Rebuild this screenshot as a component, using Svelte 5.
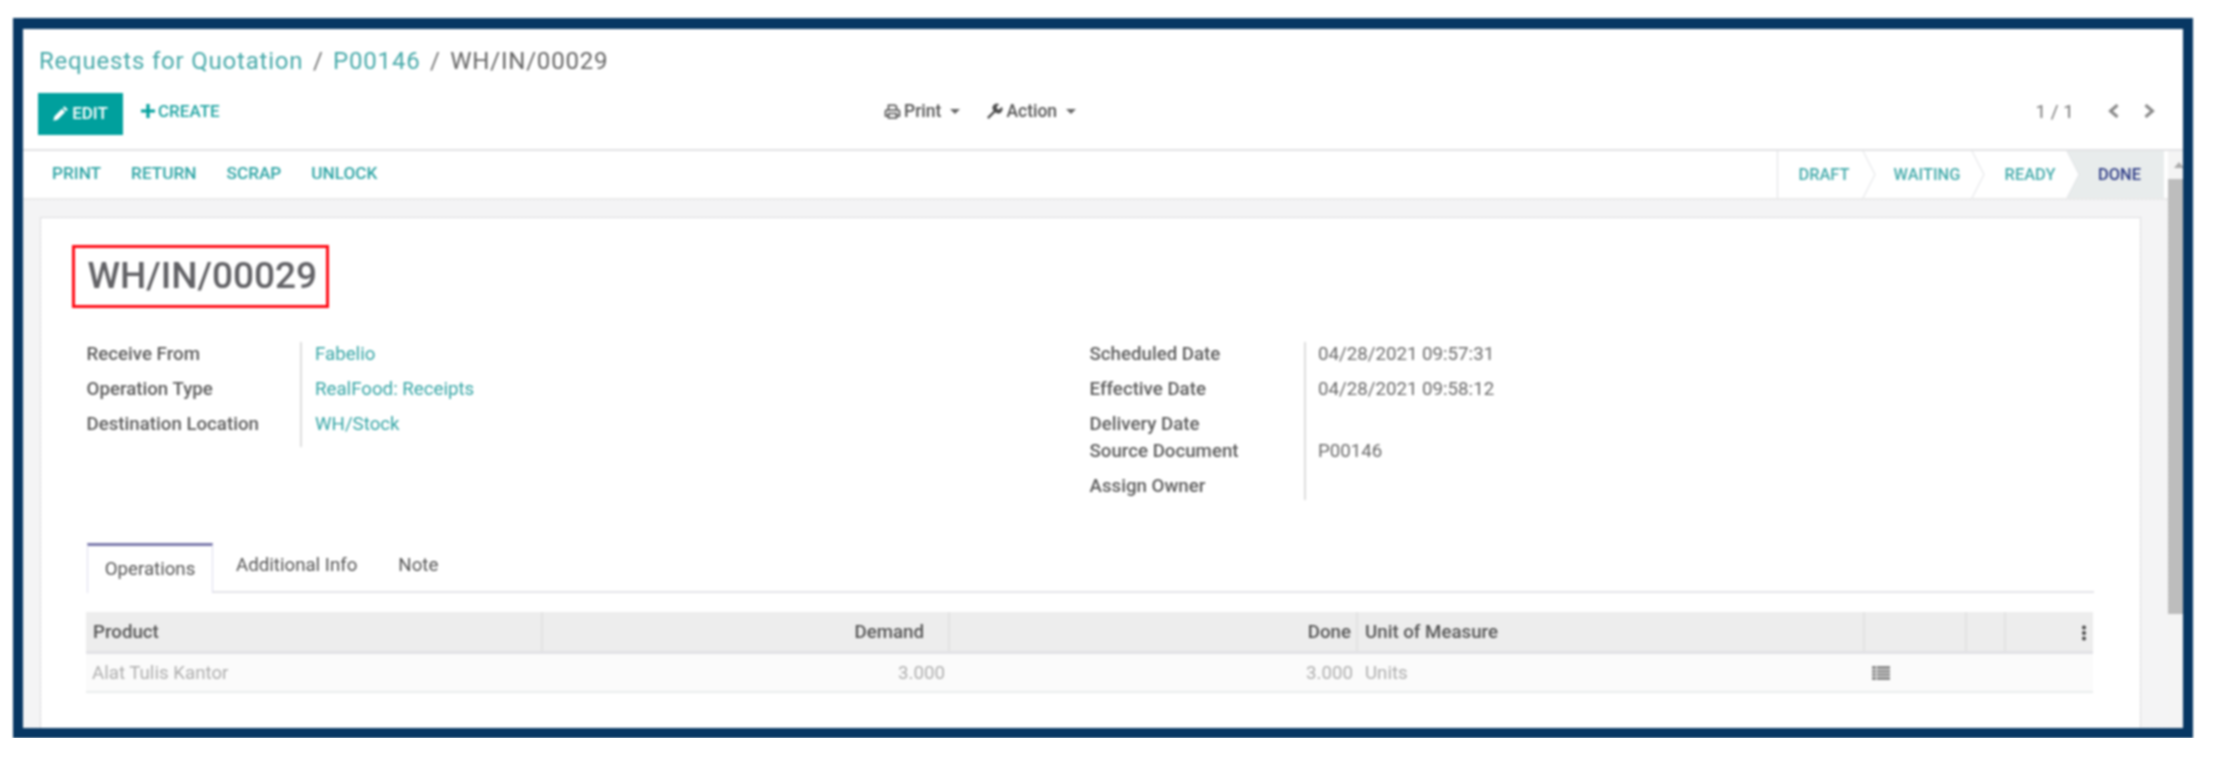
<script>
  const left = [['Receive From','Fabelio'],['Operation Type','RealFood: Receipts'],['Destination Location','WH/Stock']];
  const right = [['Scheduled Date','04/28/2021 09:57:31','r'],['Effective Date','04/28/2021 09:58:12','r'],['Delivery Date','','s'],['Source Document','P00146','r'],['Assign Owner','','r']];
  const actions = ['PRINT','RETURN','SCRAP','UNLOCK'];
  const stages = ['DRAFT','WAITING','READY','DONE'];
</script>

<div class="frame">
  <header class="cp">
    <div class="crumbs"><a href="#a">Requests for Quotation</a><i>/</i><a href="#b">P00146</a><i>/</i><span>WH/IN/00029</span></div>
    <div class="tools">
      <div class="tl">
        <button class="edit"><svg width="16" height="16" viewBox="0 0 16 16"><path d="M11.5 1.2l3.3 3.3-1.7 1.7-3.3-3.3zM8.9 3.8l3.3 3.3-7.6 7.6-4.3 1 1-4.3z" fill="#fff"/></svg>EDIT</button>
        <button class="create"><svg width="14" height="14" viewBox="0 0 14 14"><path d="M5.4 0h3.2v5.4H14v3.2H8.6V14H5.4V8.6H0V5.4h5.4z" fill="#00a09d"/></svg>CREATE</button>
      </div>
      <div class="tc">
        <span class="dd"><svg width="17" height="15" viewBox="0 0 16 15"><path d="M4 6V1.2h6.6L12 2.6V6M1 7.5q0-1.5 1.5-1.5h11q1.5 0 1.5 1.5V12h-3M4 12H1V7.5M4 9.5h8V14H4z" fill="none" stroke="#4c4c4c" stroke-width="1.6"/></svg>Print<b></b></span>
        <span class="dd"><svg width="17" height="17" viewBox="0 0 16 16"><path d="M1 13.5L7.2 7.2A4 4 0 0 1 12.4 1.2L10 3.6l.4 2 2 .4 2.4-2.4A4 4 0 0 1 8.8 8.8L2.5 15z" fill="#4c4c4c"/></svg>Action<b></b></span>
      </div>
      <div class="tr">
        <span class="pg">1 / 1</span>
        <svg width="11" height="14" viewBox="0 0 11 14"><path d="M9.5 1L2.5 7l7 6" fill="none" stroke="#888" stroke-width="3"/></svg>
        <svg width="11" height="14" viewBox="0 0 11 14"><path d="M1.5 1l7 6-7 6" fill="none" stroke="#888" stroke-width="3"/></svg>
      </div>
    </div>
  </header>

  <div class="work">
    <div class="statusbar">
      <div class="acts">{#each actions as a}<span>{a}</span>{/each}</div>
      <div class="stages">
        {#each stages as s, i}
          <span class="stage s{i}" class:cur={s === 'DONE'}>{s}{#if i < 3}<svg class="arrow" width="14" height="47" viewBox="0 0 14 47"><path d="M0 0H1L13 23.5 1 47H0z" fill="#fff"/><path d="M1 0L13 23.5 1 47" fill="none" stroke="#dfe1e4" stroke-width="1"/></svg>{/if}</span>
        {/each}
      </div>
    </div>
    <div class="scroller">
      <div class="bg">
        <main class="sheet">
          <div class="titlebox"><h1>WH/IN/00029</h1></div>
          <div class="groups">
            <div class="grp g1">
              {#each left as [l, v]}<div class="lab">{l}</div><div class="val link">{v}</div>{/each}
            </div>
            <div class="grp g2">
              {#each right as [l, v, k]}<div class="lab">{l}</div><div class="val">{v}</div>{/each}
            </div>
          </div>
          <div class="tabs">
            <span class="tab on">Operations</span><span class="tab">Additional Info</span><span class="tab">Note</span>
          </div>
          <div class="tbl">
            <div class="row head">
              <div class="c1">Product</div><div class="c2">Demand</div><div class="c3">Done</div><div class="c4">Unit of Measure</div><div class="c5"></div><div class="c6"></div>
              <div class="c7"><svg width="4" height="16" viewBox="0 0 4 16"><circle cx="2" cy="2.5" r="2" fill="#444"/><circle cx="2" cy="8" r="2" fill="#444"/><circle cx="2" cy="13.5" r="2" fill="#444"/></svg></div>
            </div>
            <div class="row body">
              <div class="c1">Alat Tulis Kantor</div><div class="c2">3.000</div><div class="c3">3.000</div><div class="c4">Units</div>
              <div class="c5"><svg width="18" height="14" viewBox="0 0 18 14"><path d="M0 0h18v14H0z" fill="#8e8e8e"/><path d="M0 3.5h18M0 7h18M0 10.5h18M4.5 0v14" stroke="#e8e8e8" stroke-width="1"/></svg></div><div class="c6"></div><div class="c7"></div>
            </div>
          </div>
        </main>
      </div>
      <div class="sb"><span class="up"></span><span class="thumb"></span></div>
    </div>
  </div>
</div>

<style>
  :global(body) { margin: 0; background: #fff; }
  .frame { box-sizing: border-box; width: 2180px; height: 720px; margin: 18px 0 0 13px; border: solid #073763; border-width: 11px 10px 10px; background: #fff; font-family: Roboto, "Liberation Sans", sans-serif; display: flex; flex-direction: column; overflow: hidden; filter: blur(0.8px); }
  .cp { height: 122px; flex: none; box-sizing: border-box; padding: 16px 0 0 16px; border-bottom: 2px solid #e2e2e4; }
  .crumbs { font-size: 24px; letter-spacing: 0.8px; line-height: 32px; color: #666; display: flex; gap: 9.5px; }
  .crumbs a { color: #46a9a9; text-decoration: none; }
  .crumbs i { font-style: normal; color: #777; }
  .tools { display: grid; grid-template-columns: 846px auto 1fr; align-items: center; margin-top: 16px; margin-left: -1px; }
  .tl { display: flex; align-items: center; gap: 18px; }
  button { font: inherit; border: 0; background: none; padding: 0; display: inline-flex; align-items: center; gap: 3px; font-weight: 500; font-size: 17px; }
  .edit { width: 85px; height: 42px; padding-bottom: 3px; background: #00a09d; color: #fff; justify-content: center; }
  .create { color: #22a5a3; margin-top: -6px; }
  .tc { display: flex; gap: 26px; color: #555; font-size: 17.5px; font-weight: 500; margin-top: -6px; }
  .dd { display: inline-flex; align-items: center; gap: 3px; }
  .dd b { width: 0; height: 0; border: 5px solid transparent; border-top-color: #666; border-bottom: 0; margin-left: 6px; }
  .tr { display: flex; justify-content: flex-end; align-items: center; gap: 25px; padding-right: 28px; color: #777; margin-top: -6px; }
  .pg { font-size: 19px; margin-right: 9px; }
  .work { flex: 1; display: flex; flex-direction: column; min-height: 0; }
  .statusbar { height: 47px; flex: none; display: flex; justify-content: space-between; }
  .acts { display: flex; gap: 30px; align-items: center; padding: 0 0 3px 29px; color: #2fa5a5; font-weight: 500; font-size: 17.2px; }
  .stages { display: flex; border-left: 1px solid #dfe1e4; height: 47px; margin-right: 19px; }
  .stage { position: relative; box-sizing: border-box; display: flex; align-items: center; justify-content: center; color: #45abab; font-weight: 500; font-size: 16.4px; height: 47px; }
  .s0 { width: 85px; padding-left: 7px; }
  .s1 { width: 109px; padding-left: 19px; }
  .s2 { width: 95px; padding-left: 21px; }
  .s3 { width: 97px; padding-left: 8px; }
  .stage.cur { background: #e8ecec; color: #2f3d86; }
  .arrow { position: absolute; right: -13px; top: 0; z-index: 1; }
  .scroller { flex: 1; display: flex; min-height: 0; }
  .bg { flex: 1; min-width: 0; box-sizing: border-box; padding: 17px 27px 0 17px; background: repeating-conic-gradient(#f0f0f1 0 25%, #f8f8f9 0 50%) 0 0 / 4px 4px; border-top: 2px solid #eaeaea; }
  .sb { width: 15px; flex: none; background: #f4f4f4; margin-top: -47px; position: relative; z-index: 2; display: flex; flex-direction: column; align-items: center; }
  .up { margin: 11px 0 0 6px; width: 0; height: 0; border: 5px solid transparent; border-bottom: 6px solid #aaa; border-top: 0; }
  .thumb { width: 100%; height: 435px; background: #bdbdbd; margin-top: 11px; }
  .sheet { background: #fff; height: 100%; box-sizing: border-box; border: 1px solid #dcdcdf; border-bottom: 0; padding: 27px 47px 0 46px; }
  .titlebox { box-sizing: border-box; width: 257px; height: 63px; margin-left: -15px; padding: 3px 0 0 12.5px; border: 3px solid #ff0a14; }
  h1 { margin: 0; font-size: 37px; line-height: 50px; font-weight: 500; color: #626266; }
  .groups { display: grid; grid-template-columns: 1003px 1fr; margin-top: 34px; font-size: 18.7px; }
  .grp { display: grid; color: #555; }
  .g1 { grid-template-columns: 213px 1fr; grid-auto-rows: 35px; align-content: start; height: 105px; }
  .g2 { grid-template-columns: 214px 1fr; grid-template-rows: 35px 35px 27px 35px 26px; }
  .lab { font-weight: 500; line-height: 24px; color: #5c5c5c; margin-left: -0.5px; }
  .val { border-left: 2px solid #ddd; padding-left: 12px; line-height: 24px; color: #6a6a6a; }
  .g1 .val { padding-left: 13px; }
  .link { color: #35a5a5; }
  .tabs { display: flex; margin-top: 43px; height: 50px; box-sizing: border-box; border-bottom: 2px solid #e4e4e8; width: 2007px; font-size: 18.7px; color: #555; }
  .tab { padding: 0 22px; line-height: 45px; }
  .tab:nth-child(2) { padding-left: 23px; }
  .tab:nth-child(3) { padding-left: 19px; }
  .tab.on { box-sizing: border-box; width: 126px; height: 50px; padding: 1px 0 0; text-align: center; background: #fff; border: 1px solid #dde; border-top: 3px solid #7c7bad; border-bottom: 0; }
  .tbl { margin: 19px 0 0 -1px; width: 2007px; font-size: 18.7px; }
  .row { display: grid; grid-template-columns: 457px 407px 408px 507px 102px 39px 87px; }
  .row > div { box-sizing: border-box; }
  .head { height: 42px; background: #ededed; font-weight: 500; color: #555; line-height: 40px; border-bottom: 3px solid #e2e2e6; box-sizing: border-box; }
  .head > div { border-right: 2px solid #e2e2e2; }
  .head .c7 { border-right: 0; }
  .c1 { padding-left: 7px; }
  .c2, .c3 { text-align: right; padding-right: 5px; }
  .head .c2 { padding-right: 24px; }
  .c4 { padding-left: 7px; }
  .c7 { text-align: right; padding-right: 7px; }
  .body { height: 39px; background: #fbfbfb; color: #aeaeae; line-height: 38px; border-bottom: 2px solid #e9ecec; box-sizing: border-box; }
  .body .c1 { padding-left: 6px; }
  .body .c5 { padding: 3px 0 0 7px; line-height: 30px; }
  .body .c5 svg, .c7 svg { vertical-align: middle; }
</style>
